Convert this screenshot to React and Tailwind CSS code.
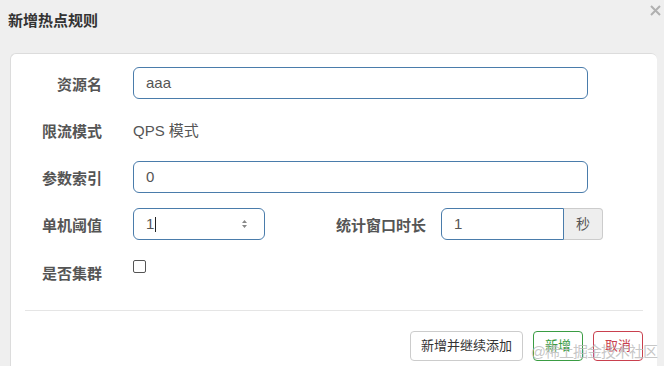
import React from "react";

const font = { fontFamily: '"Liberation Sans", "Noto Sans CJK SC", sans-serif' };

const Label = ({ children, w = "w-[91px]" }) => (
  <div className={`${w} shrink-0 pt-[3px] text-right text-[15px] font-bold text-[#555] leading-[20px]`}>
    {children}
  </div>
);

const TextInput = ({ value, w }) => (
  <div
    className={`${w} h-[32px] flex items-center pt-[1px] px-[12px] border border-[#4a7cab] rounded-[6px] text-[15px] text-[#555] bg-white`}
  >
    {value}
  </div>
);

export default function App() {
  return (
    <div
      style={font}
      className="relative w-[664px] h-[366px] overflow-hidden bg-[#efefef]"
    >
      {/* header */}
      <div className="flex items-start justify-between h-[53px] pl-[8px] pr-[3px]">
        <h1 className="mt-[11px] text-[15px] font-bold text-[#333] leading-[20px]">
          新增热点规则
        </h1>
        <svg width="11" height="11" viewBox="0 0 11 11" className="mt-[5px]">
          <path d="M1 1 L10 10 M10 1 L1 10" stroke="#b0b0b0" strokeWidth="2" />
        </svg>
      </div>

      {/* panel */}
      <div className="ml-[10px] w-[647px] h-[313px] bg-white border-l border-t border-[#dcdcdc] rounded-tl-[6px] rounded-tr-[6px] pt-[13px]">
        <div className="flex flex-col gap-[15px]">
          <div className="flex items-center h-[32px]">
            <Label>资源名</Label>
            <div className="ml-[31px]">
              <TextInput value="aaa" w="w-[455px]" />
            </div>
          </div>

          <div className="flex items-center h-[32px]">
            <Label>限流模式</Label>
            <div className="ml-[31px] pt-[3px] text-[15px] text-[#555]">QPS 模式</div>
          </div>

          <div className="flex items-center h-[32px]">
            <Label>参数索引</Label>
            <div className="ml-[31px]">
              <TextInput value="0" w="w-[455px]" />
            </div>
          </div>

          <div className="flex items-center h-[32px]">
            <Label>单机阈值</Label>
            <div className="ml-[31px] w-[132px] h-[32px] flex items-center justify-between pl-[12px] pr-[16px] border border-[#4a7cab] rounded-[6px] text-[15px] text-[#555]">
              <span className="flex items-center pt-[1px]">
                1<span className="ml-[1px] w-[1px] h-[15px] bg-[#222]" />
              </span>
              <svg width="7" height="10" viewBox="0 0 7 10">
                <path d="M3.5 1 L6 4 L1 4 Z M3.5 9 L6 6 L1 6 Z" fill="#888" />
              </svg>
            </div>
            <Label w="w-[161px]">统计窗口时长</Label>
            <div className="ml-[15px] flex h-[32px]">
              <div className="w-[123px] flex items-center pt-[1px] px-[12px] border border-[#4a7cab] rounded-l-[6px] text-[15px] text-[#555]">
                1
              </div>
              <div className="w-[39px] flex items-center justify-center bg-[#eeeeee] border border-l-0 border-[#cccccc] rounded-r-[4px] text-[14px] text-[#555]">
                秒
              </div>
            </div>
          </div>

          <div className="flex items-start h-[32px]">
            <div className="pt-[6px]">
              <Label>是否集群</Label>
            </div>
            <div className="ml-[31px] mt-[5px] w-[13px] h-[13px] border border-[#555] rounded-[2px] bg-white" />
          </div>
        </div>

        {/* footer */}
        <div className="mx-[14px] mt-[23px] border-t border-[#e5e5e5] pt-[20px] flex justify-end gap-[10px]">
          <button className="h-[30px] px-[10px] border border-[#cccccc] rounded-[4px] bg-white text-[13px] text-[#333]">
            新增并继续添加
          </button>
          <button className="h-[30px] w-[50px] border border-[#3a9c43] rounded-[4px] bg-white text-[13px] text-[#3a9c43]">
            新增
          </button>
          <button className="h-[30px] w-[50px] border border-[#c9404e] rounded-[4px] bg-white text-[13px] text-[#c9404e]">
            取消
          </button>
        </div>
      </div>

      {/* watermark */}
      <div className="absolute right-[7px] bottom-[4px] text-[15px] tracking-[-1px] leading-[20px] text-[#b8b8b8]/80 pointer-events-none">
        @稀土掘金技术社区
      </div>
    </div>
  );
}
